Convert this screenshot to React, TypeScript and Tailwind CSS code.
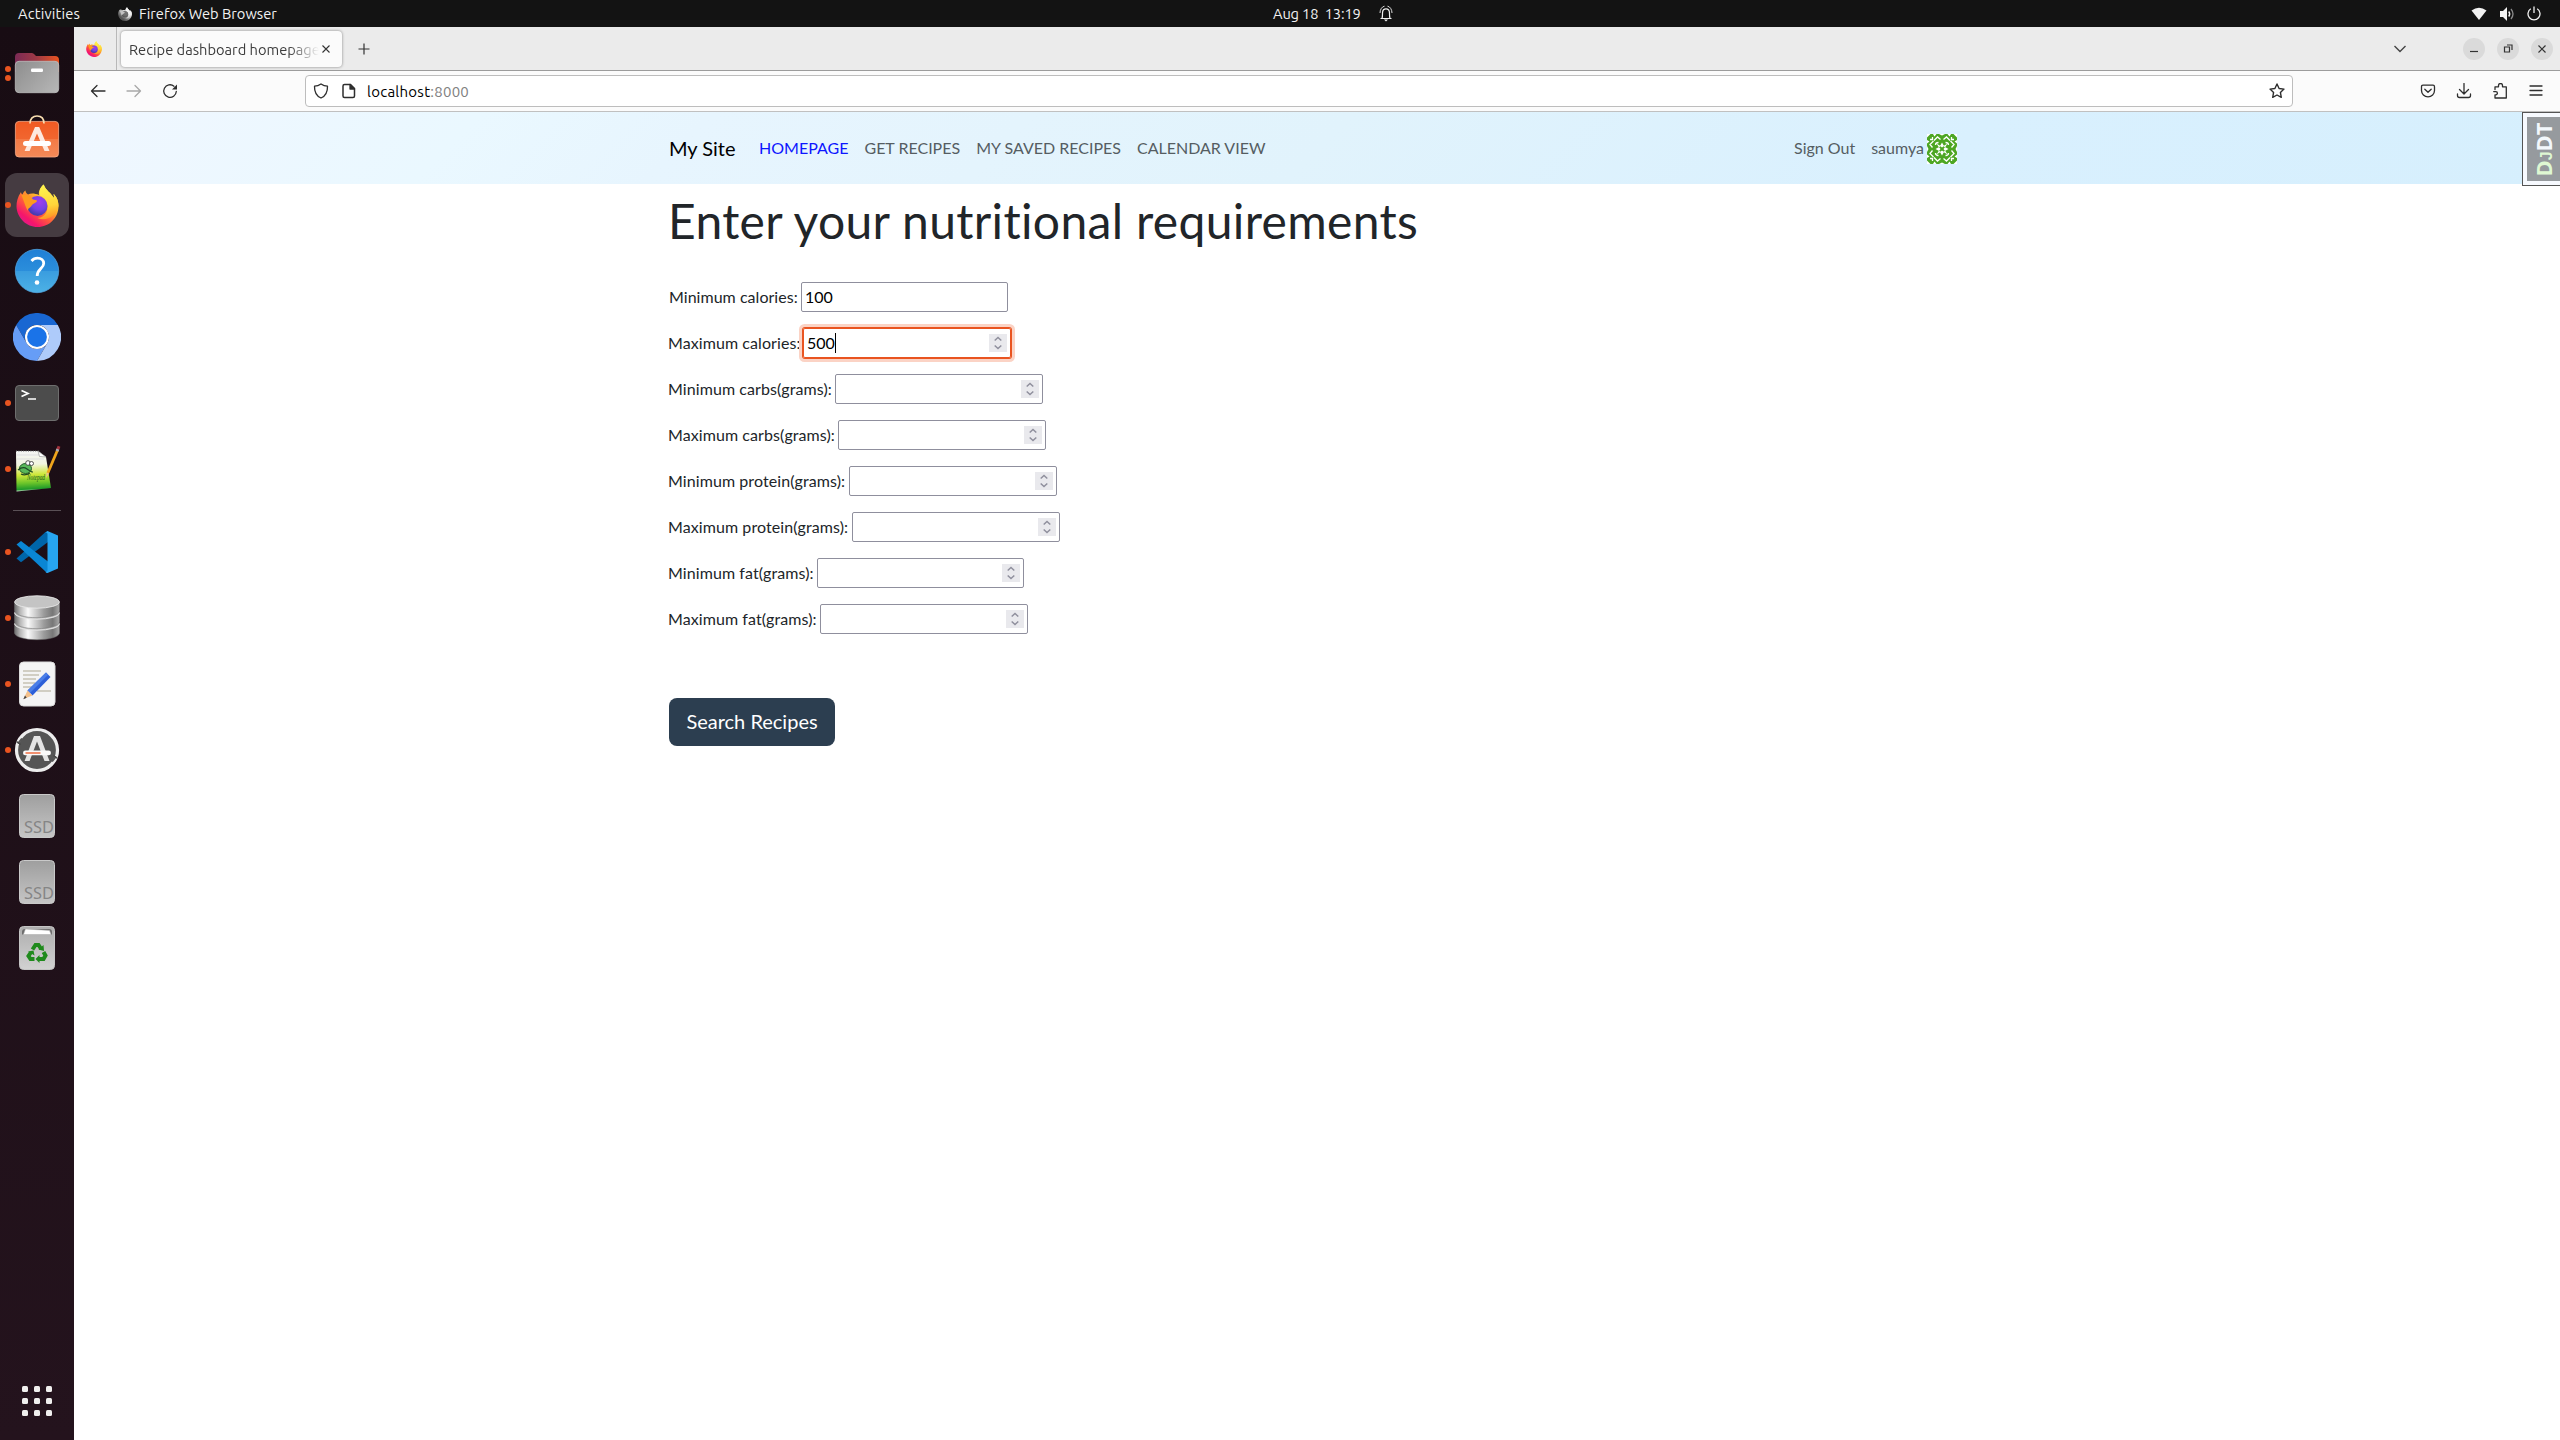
import React from "react";

const ui = "font-['Ubuntu','Noto_Sans',sans-serif]";

/* ---------- Dock icons (48x48) ---------- */
function Svg({ children }: { children: React.ReactNode }) {
  return (
    <svg width="48" height="48" viewBox="0 0 48 48" fill="none" className="block">
      {children}
    </svg>
  );
}

function FirefoxLogo({ size, id, gray = false }: { size: number; id: string; gray?: boolean }) {
  return (
    <svg width={size} height={size} viewBox="3 2 42 43" fill="none" className={gray ? "block grayscale brightness-125" : "block"}>
      <defs>
        <linearGradient id={id + "a"} x1="38" y1="6" x2="10" y2="42" gradientUnits="userSpaceOnUse">
          <stop offset="0.05" stopColor="#fff44f" />
          <stop offset="0.35" stopColor="#ffb32a" />
          <stop offset="0.6" stopColor="#ff5a3c" />
          <stop offset="0.85" stopColor="#f5156c" />
          <stop offset="1" stopColor="#e01a8a" />
        </linearGradient>
        <radialGradient id={id + "b"} cx="26" cy="20" r="13" gradientUnits="userSpaceOnUse">
          <stop offset="0" stopColor="#a03cf0" />
          <stop offset="0.6" stopColor="#7542e5" />
          <stop offset="1" stopColor="#4b3bb0" />
        </radialGradient>
        <linearGradient id={id + "c"} x1="30" y1="3" x2="38" y2="38" gradientUnits="userSpaceOnUse">
          <stop offset="0" stopColor="#fff44f" />
          <stop offset="0.6" stopColor="#ffd53a" />
          <stop offset="1" stopColor="#ff8a1e" />
        </linearGradient>
      </defs>
      <path d="M30.200 2.500C26 6 25 10 25.500 13C21 11 17 11 14.500 12.500C12.500 11.500 12 9.500 12 8.500C10.500 9.500 9.500 11 9 12.500C8 12 7.500 11 7.500 10C4 15 3 20 3 24.500C3.500 36 13 45 24 45C36 45 45 35.500 45 24C45 18 42.500 14 40 12C40.500 14 40.500 15 40.300 16C38 11 32 8.500 30.200 2.500Z" fill={`url(#${id}a)`} />
      <path d="M30.200 2.500C26 6 25.500 10.500 26.500 13.500C32 16 35 21 34 27C33 33 28 36 24 36C33 40 43 34 45 24C45 18 42.500 14 40 12C40.500 14 40.500 15 40.300 16C38 11 32 8.500 30.200 2.500Z" fill={`url(#${id}c)`} />
      <circle cx="24" cy="24" r="10" fill={`url(#${id}b)`} />
      <path d="M8 13C12 12 17 13 19.500 17.500C21 17.700 23.500 18 23.500 19C23.500 20.500 19.500 21.500 18.500 23C17 26 14 26 14.500 29C12 25 11 21 8 13Z" fill="#ff9a1f" />
    </svg>
  );
}

const FilesIcon = () => (
  <Svg>
    <defs>
      <linearGradient id="fb" x1="2" y1="0" x2="46" y2="0" gradientUnits="userSpaceOnUse">
        <stop stopColor="#7b2a55" /><stop offset="0.5" stopColor="#a03a45" /><stop offset="1" stopColor="#ea5420" />
      </linearGradient>
      <linearGradient id="ff" x1="5" y1="12" x2="40" y2="44" gradientUnits="userSpaceOnUse">
        <stop stopColor="#8f8f8f" /><stop offset="1" stopColor="#b4b4b4" />
      </linearGradient>
    </defs>
    <path d="M2 8a4 4 0 0 1 4-4h12.500q1.500 0 2.500 1l2 2h19a4 4 0 0 1 4 4v12H2Z" fill="url(#fb)" />
    <rect x="2.300" y="12.300" width="43.400" height="31.400" rx="3.700" fill="url(#ff)" stroke="#bcbcbc" strokeWidth="0.800" />
    <rect x="18" y="19.500" width="12" height="3.500" rx="1.200" fill="#fff" />
  </Svg>
);

const SoftwareIcon = () => (
  <Svg>
    <defs>
      <linearGradient id="sw" x1="0" y1="6" x2="0" y2="42" gradientUnits="userSpaceOnUse">
        <stop stopColor="#f15a22" /><stop offset="0.500" stopColor="#f1662f" /><stop offset="0.510" stopColor="#f37a45" /><stop offset="1" stopColor="#f48a58" />
      </linearGradient>
    </defs>
    <rect x="2.400" y="6.400" width="43.200" height="35.600" rx="3.600" fill="url(#sw)" stroke="#f8a987" strokeWidth="0.800" />
    <path d="M17 8.500C17 3.500 20 1 24 1s7 2.500 7 7.500" stroke="#f8deb0" strokeWidth="1.700" />
    <path d="M22 12h4.200L36.500 36h-5L24 18.500 16.600 36h-5Z" fill="#fde9df" />
    <rect x="10" y="26" width="28" height="5" rx="2.500" fill="#fff" />
  </Svg>
);

const HelpIcon = () => (
  <Svg>
    <defs>
      <linearGradient id="hp" x1="0" y1="2" x2="0" y2="46" gradientUnits="userSpaceOnUse">
        <stop stopColor="#1f7fd6" /><stop offset="0.500" stopColor="#2b8edb" /><stop offset="0.510" stopColor="#3a9ddf" /><stop offset="1" stopColor="#4db2e6" />
      </linearGradient>
    </defs>
    <circle cx="24" cy="24" r="21.700" fill="url(#hp)" stroke="#54abea" strokeWidth="0.700" />
    <path d="M18.500 14c1.800-2 3.800-2.800 6-2.800 3.700 0 6.200 2 6.200 5.300 0 5-6.500 5.500-6.500 12.500" stroke="#fff" strokeWidth="2.800" />
    <circle cx="24" cy="35.500" r="2.300" fill="#fff" />
  </Svg>
);

const ChromiumIcon = () => (
  <Svg>
    <path d="M3.200 12A24 24 0 0 1 44.800 12H24A12 12 0 0 0 13.600 30Z" fill="#1967d2" />
    <path d="M3.200 12A24 24 0 0 0 24 48L34.400 30A12 12 0 0 1 13.600 30Z" fill="#669df6" />
    <path d="M44.800 12A24 24 0 0 1 24 48L34.400 30A12 12 0 0 0 24 12Z" fill="#aecbfa" />
    <circle cx="24" cy="24" r="12" fill="#fff" />
    <circle cx="24" cy="24" r="9.900" fill="#1a73e8" />
  </Svg>
);

const TerminalIcon = () => (
  <Svg>
    <rect x="2.500" y="6.500" width="43" height="35" rx="3.500" fill="#4c4c4c" stroke="#6e6e6e" />
    <path d="M8.500 11.500l6.500 3-6.500 3" stroke="#fff" strokeWidth="1.700" />
    <path d="M15 20h8" stroke="#fff" strokeWidth="1.500" />
  </Svg>
);

const NotepadIcon = () => (
  <Svg>
    <defs>
      <linearGradient id="np" x1="18" y1="5" x2="20" y2="46" gradientUnits="userSpaceOnUse">
        <stop stopColor="#f4f4f6" /><stop offset="0.350" stopColor="#f3f6e0" /><stop offset="0.600" stopColor="#cfe83a" /><stop offset="0.800" stopColor="#6cc52a" /><stop offset="0.950" stopColor="#1f9a2a" /><stop offset="1" stopColor="#e8f0e8" />
      </linearGradient>
    </defs>
    <path d="M3 6h22l8 6 5 31L3.500 46.500Z" fill="url(#np)" />
    <path d="M3 5.800h23" stroke="#555" strokeWidth="1.200" strokeDasharray="1 1.400" />
    <path d="M4 10h22M4 14h27" stroke="#d5d5de" strokeWidth="0.700" />
    <path d="M25 6l1.500 5.500L33 12Z" fill="#fff" stroke="#888" strokeWidth="0.600" />
    <ellipse cx="12.500" cy="23.500" rx="6" ry="5" fill="#59b85a" stroke="#225c2a" />
    <path d="M5 25q5-4 9-1t6 3M8 29q4 2 9-1" stroke="#1d4a24" strokeWidth="1.200" />
    <circle cx="15" cy="18" r="2.300" fill="#fff" stroke="#333" strokeWidth="0.800" />
    <circle cx="18.500" cy="18.500" r="2" fill="#fff" stroke="#333" strokeWidth="0.800" />
    <text x="14" y="34.500" fontSize="8.500" textLength="18" lengthAdjust="spacingAndGlyphs" fill="#235a1c" fontFamily="Liberation Serif, serif" fontStyle="italic">Notepad</text>
    <path d="M44.800 4.500L34.800 28" stroke="#f0a51c" strokeWidth="2.800" />
    <path d="M33.500 27.500l2.600 1.100-3 4.400Z" fill="#eac28c" />
    <path d="M46 1.300l-1.200 3.200" stroke="#a1323c" strokeWidth="3" />
    <path d="M44.900 4.200l-.9 2" stroke="#a9a9b4" strokeWidth="3" />
  </Svg>
);

const VscodeIcon = () => (
  <Svg>
    <path d="M3.500 30.500L8 34.300 35 14V3.500L32.500 4Z" fill="#0065a9" />
    <path d="M3.500 16.500L8 13l27 20.500V45l-2.500-1.500Z" fill="#0a86d4" />
    <path d="M34.500 3L45 7.500V40.500L34.500 45q-1.500 0-2.200-1.500 2.200.6 2.200-1.500V6q0-2-2.200-1.500Z" fill="#27a5f0" />
  </Svg>
);

const DatabaseIcon = () => (
  <Svg>
    <defs>
      <linearGradient id="db" x1="1.500" y1="0" x2="46.500" y2="0" gradientUnits="userSpaceOnUse">
        <stop stopColor="#6c6c6c" /><stop offset="0.120" stopColor="#b5b5b5" /><stop offset="0.300" stopColor="#fafafa" /><stop offset="0.650" stopColor="#9c9c9c" /><stop offset="0.850" stopColor="#777" /><stop offset="1" stopColor="#aaa" />
      </linearGradient>
    </defs>
    {[30, 19, 8].map((y) => (
      <g key={y}>
        <path d={`M1.500 ${y}v9c0 3.700 10 6.700 22.500 6.700s22.500-3 22.500-6.700v-9Z`} fill="url(#db)" stroke="#6e6e6e" strokeWidth="0.500" />
        <ellipse cx="24" cy={y} rx="22.300" ry="6.200" fill="#c4c4c4" stroke="#e8e8e8" strokeWidth="0.900" />
      </g>
    ))}
  </Svg>
);

const EditorIcon = () => (
  <Svg>
    <rect x="6.500" y="2" width="35.500" height="44" rx="4" fill="#f4f4f4" stroke="#dcdcdc" />
    <path d="M10 11h18M10 15h16M10 19h13M10 23h12M10 27h10M24 31h14" stroke="#c5c1b2" strokeWidth="1.600" />
    <path d="M14.500 30.500L33 12.500l4.500 4.500L19.500 35.500Z" fill="#2d5fd8" />
    <path d="M33 12.500l2.200 2.200L17 33l-2.500-2.500Z" fill="#4a7ee8" />
    <path d="M14.500 30.500l5 5L10.500 39Z" fill="#f3c08b" />
    <path d="M12 35.500l1.700 2.200-3.400 1.500Z" fill="#444" />
  </Svg>
);

const UpdaterIcon = () => (
  <Svg>
    <circle cx="24" cy="24" r="20.500" fill="#555" stroke="#ededed" strokeWidth="3.200" />
    <path d="M5 17.500l4-5M43 30.500l-4 5" stroke="#555" strokeWidth="2" />
    <path d="M3.500 15.500l4 3M44.500 32.500l-4-3" stroke="#444" strokeWidth="1.400" />
    <path d="M21 10h6l9.500 25h-5L24 15.500 16.600 35h-5Z" fill="#e4e4e4" />
    <rect x="10" y="24.500" width="28" height="4.800" rx="2.400" fill="#fafafa" />
    <path d="M12.500 27h15" stroke="#ee6336" strokeWidth="1.400" />
  </Svg>
);

const SsdIcon = () => (
  <Svg>
    <defs>
      <linearGradient id="sd" x1="0" y1="2" x2="0" y2="46" gradientUnits="userSpaceOnUse">
        <stop stopColor="#9e9e9e" /><stop offset="1" stopColor="#c6c6c6" />
      </linearGradient>
    </defs>
    <rect x="6.500" y="2.500" width="35" height="43" rx="4" fill="url(#sd)" stroke="#c9c9c9" />
    <text x="11" y="41" fontSize="16" textLength="30" lengthAdjust="spacingAndGlyphs" fill="#858585" fontFamily="Noto Sans, sans-serif">SSD</text>
  </Svg>
);

const TrashIcon = () => (
  <Svg>
    <defs>
      <linearGradient id="tr" x1="0" y1="2" x2="0" y2="46" gradientUnits="userSpaceOnUse">
        <stop stopColor="#adadad" /><stop offset="1" stopColor="#d2d2d2" />
      </linearGradient>
    </defs>
    <rect x="6.500" y="2.500" width="35" height="43" rx="4" fill="url(#tr)" stroke="#c4c4c4" />
    <path d="M9 10.500V8q0-3 3-3h24q3 0 3 3v2.500Z" fill="#6d6d6d" />
    <path d="M10.500 10.500l2-5.500 24 1.500 1.500 4Z" fill="#fff" stroke="#bbb" strokeWidth="0.500" />
    <g fill="none" stroke="#1f8a1c" strokeWidth="4">
      <path d="M19.500 25.500l3-4.500h3l2.700 4" />
      <path d="M30.500 28l2 3.500-2 3.500h-5" />
      <path d="M21.500 35h-4l-2-3 2.300-3.500" />
    </g>
    <path d="M30.500 21l.5 6-5.500-1.500ZM26.500 31v8l-4-4ZM15 27.500l5.500-1 1 5Z" fill="#1f8a1c" />
  </Svg>
);

function DockItem({ children, dots = 0, active = false }: { children: React.ReactNode; dots?: number; active?: boolean }) {
  return (
    <div className="relative flex h-[66px] w-[74px] items-center justify-center">
      <div className={active ? "flex h-16 w-16 items-center justify-center rounded-xl bg-[#453b41]" : "flex h-16 w-16 items-center justify-center"}>
        {children}
      </div>
      <div className="absolute inset-y-0 left-[5px] flex flex-col justify-center gap-[3px]">
        {Array.from({ length: dots }).map((_, i) => (
          <span key={i} className="h-1.5 w-1.5 rounded-full bg-[#e95420]" />
        ))}
      </div>
    </div>
  );
}

function Dock() {
  return (
    <aside className="flex w-[74px] shrink-0 flex-col bg-linear-to-b from-[#180c13] to-[#24131d] pt-[13px]">
      <DockItem dots={2}><FilesIcon /></DockItem>
      <DockItem><SoftwareIcon /></DockItem>
      <DockItem dots={1} active><FirefoxLogo size={43} id="dock" /></DockItem>
      <DockItem><HelpIcon /></DockItem>
      <DockItem><ChromiumIcon /></DockItem>
      <DockItem dots={1}><TerminalIcon /></DockItem>
      <DockItem dots={1}><NotepadIcon /></DockItem>
      <div className="mx-[13px] my-2 h-px shrink-0 bg-[#5a5056]" />
      <DockItem dots={1}><VscodeIcon /></DockItem>
      <DockItem dots={1}><DatabaseIcon /></DockItem>
      <DockItem dots={1}><EditorIcon /></DockItem>
      <DockItem dots={1}><UpdaterIcon /></DockItem>
      <DockItem><SsdIcon /></DockItem>
      <DockItem><SsdIcon /></DockItem>
      <DockItem><TrashIcon /></DockItem>
      <div className="mt-auto mb-6 ml-[22px] grid w-[30px] grid-cols-3 gap-1.5">
        {Array.from({ length: 9 }).map((_, i) => (
          <span key={i} className="h-1.5 w-1.5 rounded-[1.5px] bg-[#f0efee]" />
        ))}
      </div>
    </aside>
  );
}

/* ---------- System bar ---------- */
function TopBar() {
  return (
    <header className={`flex h-[27px] shrink-0 items-center bg-[#131313] text-[14.667px] leading-[27px] text-[#f2f2f2] ${ui}`}>
      <div className="flex w-[1273px] items-center">
        <span className="ml-[18px] w-[63px] whitespace-nowrap tracking-[0.2px]">Activities</span>
        <span className="ml-[37px]"><FirefoxLogo size={14} id="bar" gray /></span>
        <span className="ml-[7px] whitespace-nowrap">Firefox Web Browser</span>
      </div>
      <span className="w-[89px] whitespace-pre tracking-[-0.15px]">Aug 18  13:19</span>
      <svg className="ml-[17px]" width="14" height="18" viewBox="0 0 14 18" fill="none" stroke="#f2f2f2" strokeWidth="1.200">
        <path d="M1.500 13.500h11M3 13.500C3.600 11.500 3.500 10 3.500 8C3.500 5 5 3.800 7 3.800S10.500 5 10.500 8c0 2-.1 3.500.5 5.500" />
        <path d="M1 8C1 4.500 3 1.500 5.500 1.200M13 8c0-3.500-2-6.500-4.500-6.800" strokeWidth="0.900" />
        <path d="M5 14.500h4l-2 2Z" fill="#f2f2f2" stroke="none" />
      </svg>
      <div className="ml-auto flex items-center pr-[19px]">
        <svg width="16" height="14" viewBox="0 0 16 14"><path d="M0.500 3.500Q8-2 15.500 3.500L8 13Z" fill="#f2f2f2" /></svg>
        <svg className="ml-3" width="16" height="16" viewBox="0 0 16 16" fill="none">
          <path d="M1 5h3l4-4v14l-4-4H1Z" fill="#f2f2f2" />
          <path d="M9.700 5.500q2 2.500 0 5" stroke="#f2f2f2" strokeWidth="1.400" />
          <path d="M12 3q4 5 0 10" stroke="#8a8a8a" strokeWidth="1.300" />
        </svg>
        <svg className="ml-3" width="14" height="15" viewBox="0 0 14 15" fill="none" stroke="#f2f2f2" strokeWidth="1.300">
          <path d="M7 0.500v6.500M3.800 2.800A6 6 0 1 0 10.200 2.800" />
        </svg>
      </div>
    </header>
  );
}

/* ---------- Browser chrome ---------- */
function TabStrip() {
  return (
    <div className="flex h-[44px] shrink-0 items-center border-b border-[#9c9c9c] bg-[#ebebeb]">
      <div className="flex h-full w-[43px] items-center border-r border-[#b8b8b8] pl-3">
        <FirefoxLogo size={16} id="pin" />
      </div>
      <div className="ml-1 flex h-9 w-[221px] items-center rounded bg-[#fbfbfb] pl-2 shadow-[0_0_3px_rgba(0,0,0,0.45)]">
        <span className={`w-[190px] overflow-hidden pt-0.5 whitespace-nowrap text-[14.667px] text-[#3c3c3c] ${ui} mask-[linear-gradient(to_right,black_84%,transparent)]`}>
          Recipe dashboard homepage
        </span>
        <svg className="ml-[3px]" width="8" height="8" viewBox="0 0 8 8" stroke="#333" strokeWidth="1.100"><path d="M0.500 0.500l7 7M7.500 0.500l-7 7" /></svg>
      </div>
      <svg className="ml-4" width="12" height="12" viewBox="0 0 12 12" stroke="#333" strokeWidth="1.200"><path d="M6 0.500v11M0.500 6h11" /></svg>
      <svg className="mr-14 ml-auto" width="14" height="8" viewBox="0 0 14 8" fill="none" stroke="#444" strokeWidth="1.400"><path d="M1.500 1L7 6.500 12.500 1" /></svg>
      <div className="flex gap-3 pr-[7px]">
        {[
          "M7 13.500h8",
          "M7.500 9h5v5h-5ZM10 7h5v5",
          "M7.500 7.500l7 7M14.500 7.500l-7 7",
        ].map((d, i) => (
          <span key={i} className="h-[22px] w-[22px] rounded-full bg-[#dadada]">
            <svg width="22" height="22" viewBox="0 0 22 22" fill="none" stroke="#333" strokeWidth="1.200"><path d={d} /></svg>
          </span>
        ))}
      </div>
    </div>
  );
}

function I16({ children, className = "" }: { children: React.ReactNode; className?: string }) {
  return (
    <svg className={className} width="16" height="16" viewBox="0 0 16 16" fill="none" stroke="#2e2e2e" strokeWidth="1.300" strokeLinecap="round" strokeLinejoin="round">
      {children}
    </svg>
  );
}

function Toolbar() {
  return (
    <div className="flex h-[41px] shrink-0 items-center border-b border-[#c0c0c0] bg-[#fbfbfb]">
      <I16 className="ml-4"><path d="M15 8H1.500M7 2.500L1.500 8 7 13.500" /></I16>
      <I16 className="ml-5 opacity-40"><path d="M1 8h13.500M9 2.500L14.500 8 9 13.500" /></I16>
      <I16 className="ml-5">
        <path d="M14.300 8.500A6.300 6.300 0 1 1 12 3.200" />
        <path d="M15 1.500v5h-5Z" fill="#2e2e2e" stroke="none" />
      </I16>
      <div className="ml-[127px] flex h-8 w-[1988px] items-center rounded border border-[#bdbdbd] bg-white">
        <I16 className="ml-[7px]"><path d="M8 1Q5 3.200 1.500 3.200C1.300 9.500 3.500 13 8 15c4.500-2 6.700-5.500 6.500-11.800Q11 3.200 8 1Z" /></I16>
        <I16 className="ml-3">
          <path d="M3.500 1.500H9.500L13.500 5.500V13a1.500 1.500 0 0 1-1.500 1.500H3.500A1.500 1.500 0 0 1 2 13V3A1.500 1.500 0 0 1 3.500 1.500Z" strokeWidth="1.500" />
          <path d="M9 1.500L13.500 6H9Z" fill="#2e2e2e" />
        </I16>
        <span className={`ml-2.5 pt-0.5 text-[15px] tracking-[0.25px] text-[#808080] ${ui}`}><span className="text-black">localhost</span>:8000</span>
        <I16 className="mr-[7px] ml-auto"><path d="M8 1l2.100 4.500 4.900.6-3.600 3.300.9 4.900L8 12l-4.300 2.300.9-4.900L1 6.100l4.900-.6Z" strokeWidth="1.400" /></I16>
      </div>
      <I16 className="mr-5 ml-auto"><path d="M3 2.200h10q1.500 0 1.500 1.500v3.800a6.500 6.300 0 0 1-13 0V3.700Q1.500 2.200 3 2.200ZM4.800 6.200L8 9.300l3.200-3.100" /></I16>
      <I16 className="mr-5"><path d="M8 .5v10M3.500 6.500L8 11l4.500-4.500M1.500 11v1.500q0 2 2 2h9q2 0 2-2V11" /></I16>
      <I16 className="mr-5"><path d="M3 6.500V3.800h3.500V2.500a2 2 0 0 1 4 0v1.300H14.300V15H3v-3.200h.8a1.500 1.500 0 1 0 0-3.200H1.700" /></I16>
      <I16 className="mr-4"><path d="M2 3h12M2 7.500h12M2 12h12" /></I16>
    </div>
  );
}

/* ---------- Page ---------- */

/* One quadrant of the identicon, mirrored into the other three. */
const Quadrant = () => (
  <>
    <path d="M0 0h3.500L0 3.500ZM6 0h3.500L7.500 2.500ZM0 6v3.500L2.500 7.500ZM12 0h3v1.500ZM0 12v3h1.500Z" />
    <path d="M3 5.500h2.500V3M7 6.500l3.500-3.500 3 2.500M6.500 7L3 10.500l2.500 3M8.500 11q0-2.500 3-2.500" fill="none" stroke="#fff" strokeWidth="1.300" />
    <path d="M15 8.500v5l-2-1.500ZM8.500 15h5l-1.500-2ZM9.500 9.500l4 2.500-1.500 1.500Z" />
  </>
);

function Avatar() {
  return (
    <svg width="30" height="30" viewBox="0 0 30 30" className="block bg-[#4da622]" fill="#fff">
      <g><Quadrant /></g>
      <g transform="matrix(-1 0 0 1 30 0)"><Quadrant /></g>
      <g transform="matrix(1 0 0 -1 0 30)"><Quadrant /></g>
      <g transform="matrix(-1 0 0 -1 30 30)"><Quadrant /></g>
    </svg>
  );
}

function Navbar() {
  return (
    <nav className="relative h-[72px] shrink-0 bg-[linear-gradient(135deg,#f0f7ff_0%,#eaf8ff_16%,#e7f5fe_25%,#e1f3fc_50%,#d9f0fe_75%,#d6effd_100%)]">
      <div className="mx-auto flex h-full w-[1320px] items-center px-3 text-[#555d62]">
        <span className="mr-[15.5px] text-[20px] text-black">My Site</span>
        <a className="px-2 text-[#0d16ff]">HOMEPAGE</a>
        <a className="px-2">GET RECIPES</a>
        <a className="px-2">MY SAVED RECIPES</a>
        <a className="px-2">CALENDAR VIEW</a>
        <a className="ml-auto px-2">Sign Out</a>
        <a className="flex items-center gap-[3px] px-2">saumya<span className="mt-0.5"><Avatar /></span></a>
      </div>
      <div className="absolute top-0 right-0 flex h-[74px] w-[38px] items-center justify-end border border-r-0 border-[#555] bg-[#f7faff]">
        <div className="flex h-16 w-[33px] items-center justify-center bg-[#969a9e]">
          <span className="-rotate-90 whitespace-nowrap font-['Open_Sans',sans-serif] text-[22px] leading-none font-bold text-[#f3f8fd]">
            <span className="text-[#dff8d3]">D<span className="font-['Liberation_Sans',sans-serif] text-[16px]">J</span></span>DT
          </span>
        </div>
      </div>
    </nav>
  );
}

function Spinner() {
  return (
    <span className="flex h-[18px] w-[18px] items-center justify-center bg-[#e9e9ed]">
      <svg width="8" height="14" viewBox="0 0 8 14" fill="none" stroke="#8f8f9d" strokeWidth="1.500"><path d="M0.700 4.500L4 1.500l3.300 3M0.700 9.500l3.300 3 3.300-3" /></svg>
    </span>
  );
}

const FIELDS = [
  { label: "Minimum calories:", value: "100", width: "w-[132px]", box: "w-[207px]" },
  { label: "Maximum calories:", value: "500", width: "w-[134px]", box: "w-[208px]", focus: true, spinner: true },
  { label: "Minimum carbs(grams):", width: "w-[166px]", box: "w-[208px]", spinner: true },
  { label: "Maximum carbs(grams):", width: "w-[169px]", box: "w-[208px]", spinner: true },
  { label: "Minimum protein(grams):", width: "w-[180px]", box: "w-[208px]", spinner: true },
  { label: "Maximum protein(grams):", width: "w-[183px]", box: "w-[208px]", spinner: true },
  { label: "Minimum fat(grams):", width: "w-[148px]", box: "w-[207px]", spinner: true },
  { label: "Maximum fat(grams):", width: "w-[151px]", box: "w-[208px]", spinner: true },
];

function Page() {
  return (
    <main className="flex flex-1 flex-col bg-white font-['Lato',sans-serif] text-[16px] text-[#212529]">
      <Navbar />
      <div className="mx-auto w-[1320px] px-3">
        <h1 className="mt-2 -indent-px text-[48px] leading-[58px] tracking-[0.34px] [font-variant-ligatures:none]">Enter your nutritional requirements</h1>
        <form className="mt-8 flex flex-col gap-4">
          {FIELDS.map((f, i) => (
            <div key={f.label} className="flex h-[30px] items-center">
              <span className={`shrink-0 leading-6 whitespace-nowrap ${f.width} ${i === 0 ? "tracking-[0.03px]" : "-indent-px tracking-[0.08px]"}`}>{f.label}</span>
              <div
                className={`${f.box} ${
                  f.focus
                    ? "flex h-[30px] items-center rounded-[2px] bg-white pr-[4px] pl-1 text-black shadow-[0_0_0_1px_#e95420,inset_0_0_0_1px_#e95420,0_0_0_4px_#fbd3c5]"
                    : "flex h-[30px] items-center rounded-[2px] border border-[#8f8f9d] bg-white pr-[3px] pl-[3px] text-black"
                }`}
              >
                <span>{f.value}</span>
                {f.focus && <span className="h-5 w-px bg-black" />}
                {f.spinner && <span className="ml-auto"><Spinner /></span>}
              </div>
            </div>
          ))}
        </form>
        <button className="mt-16 h-12 w-[166px] rounded-lg bg-[#2c3e50] pb-0.5 text-[20px] text-white">Search Recipes</button>
      </div>
    </main>
  );
}

export default function App() {
  return (
    <div className="flex h-[1440px] w-[2560px] flex-col overflow-hidden">
      <TopBar />
      <div className="flex flex-1">
        <Dock />
        <div className="flex flex-1 flex-col">
          <TabStrip />
          <Toolbar />
          <Page />
        </div>
      </div>
    </div>
  );
}
